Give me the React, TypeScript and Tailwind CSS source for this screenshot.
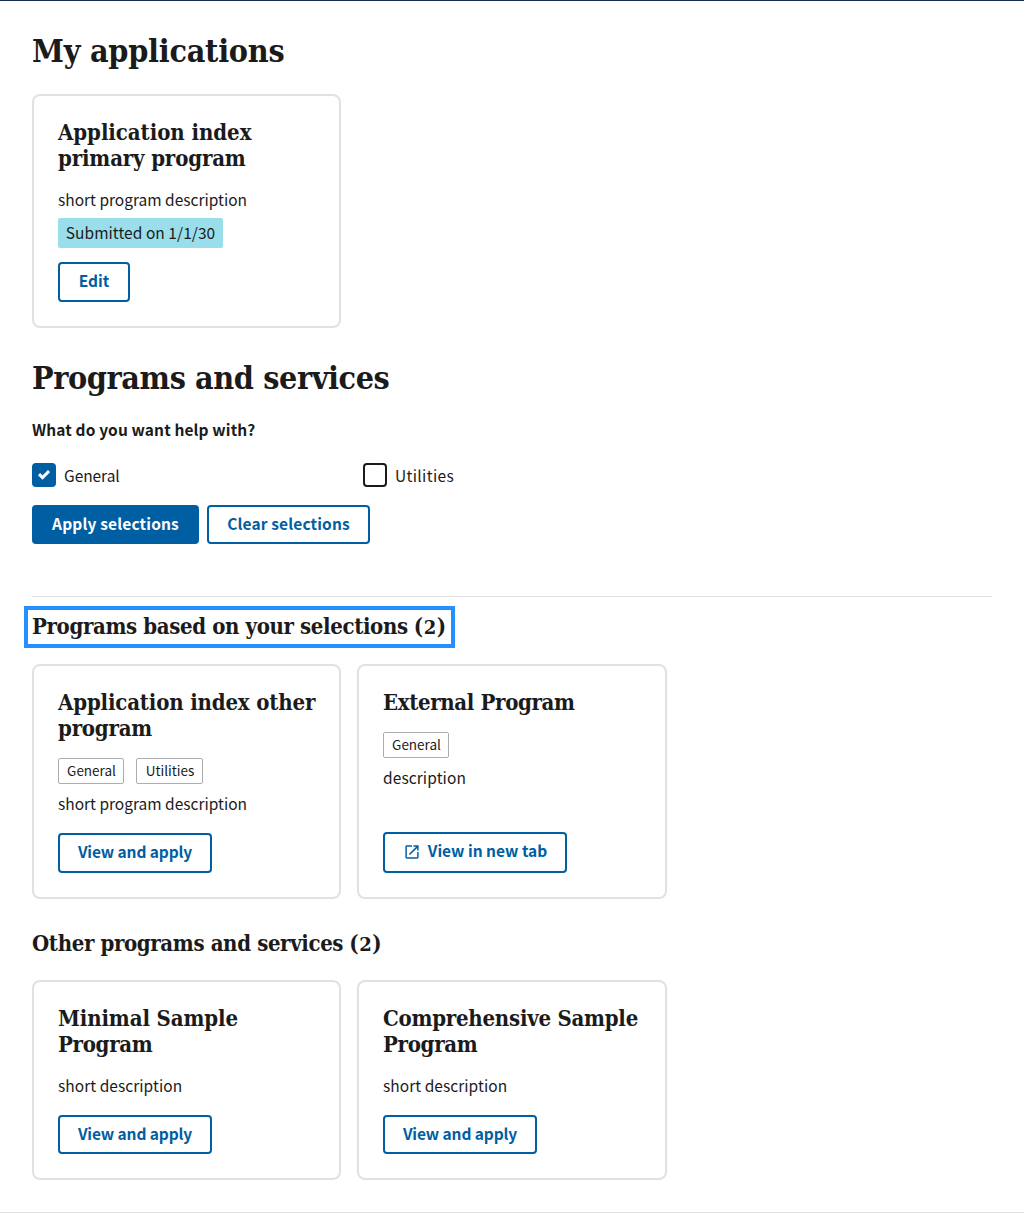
import type { ReactNode } from 'react';

const serif = 'font-["DejaVu_Serif_Condensed","DejaVu_Serif",serif] font-bold';

function CardTitle({ lines }: { lines: [string, string][] }) {
  return (
    <h4 className={`${serif} -mt-px mb-px text-[22px] leading-[26px]`}>
      {lines.map(([text, tracking]) => (
        <span key={text} className={`block whitespace-nowrap ${tracking}`}>
          {text}
        </span>
      ))}
    </h4>
  );
}

function SectionTitle({ text, className }: { text: string; className: string }) {
  return (
    <h3 className={`${serif} flex h-[26px] items-baseline whitespace-pre text-[22px] leading-6 ${className}`}>
      {text}
      <span className="ml-[6px] mr-px">(</span>
      <span className='font-["DejaVu_Serif",serif] text-[18px]'>2</span>
      <span className="ml-px">)</span>
    </h3>
  );
}

function Card({ className, children }: { className: string; children: ReactNode }) {
  return (
    <li className={`flex flex-col items-start rounded-lg border-2 border-[#dfe1e2] p-6 ${className}`}>
      {children}
    </li>
  );
}

function Description({ text, className = '' }: { text: string; className?: string }) {
  return <p className={`mb-px whitespace-nowrap leading-6 ${className}`}>{text}</p>;
}

function Category({ text, className }: { text: string; className: string }) {
  return (
    <span
      className={`flex h-[26px] items-center justify-center rounded-[2px] border border-[#a9aeb1] pb-px pl-px text-[13.5px] leading-none ${className}`}
    >
      {text}
    </span>
  );
}

function Button({ className, children }: { className: string; children: ReactNode }) {
  return (
    <button
      className={`flex items-center justify-center whitespace-nowrap rounded border-2 border-[#005ea2] font-bold leading-none ${className}`}
    >
      {children}
    </button>
  );
}

export default function App() {
  return (
    <div className='h-[1213px] border-t border-t-[#162e51] border-b border-b-[#dfe1e2] bg-white px-8 pt-[30px] font-["Noto_Sans_CJK_SC",sans-serif] text-[15.5px] text-[#1b1b1b]'>
      <h2 className={`${serif} text-[32px] leading-10 tracking-[-0.25px]`}>My applications</h2>
      <ul className="mt-[23px] flex">
        <Card className="h-[234px] w-[309px]">
          <CardTitle
            lines={[
              ['Application index', 'tracking-[-0.05px]'],
              ['primary program', 'tracking-[-0.15px]'],
            ]}
          />
          <Description text="short program description" className="mt-[15px]" />
          <p className="mt-1.5 flex h-[30px] w-[165px] items-center justify-center rounded-[2px] bg-[#99deea] pb-px leading-none tracking-[0.05px]">
            Submitted on 1/1/30
          </p>
          <Button className="mt-auto h-10 w-[72px] pb-[3px] text-[#005ea2]">Edit</Button>
        </Card>
      </ul>

      <h2 className={`${serif} mt-[30px] text-[32px] leading-10 tracking-[-0.4px]`}>
        Programs and services
      </h2>
      <p className="mt-[19px] font-bold leading-6 tracking-[0.12px]">What do you want help with?</p>
      <div className="mt-[22px] flex">
        <label className="flex w-[331px] gap-2 leading-6 tracking-[-0.05px]">
          <span className="flex size-6 items-center justify-center rounded bg-[#005ea2] pb-px">
            <svg width="12" height="10" viewBox="0 0 12 10" fill="none">
              <path d="M1 4.2 L4.5 7.6 L11 1.1" stroke="white" strokeWidth="3" />
            </svg>
          </span>
          <span className="h-6">General</span>
        </label>
        <label className="flex gap-2 leading-6 tracking-[0.35px]">
          <span className="size-6 rounded border-2 border-[#1b1b1b]" />
          <span className="h-6">Utilities</span>
        </label>
      </div>
      <div className="mt-[18px] flex gap-2">
        <Button className="h-[39px] w-[167px] bg-[#005ea2] pb-px tracking-[0.16px] text-white">
          Apply selections
        </Button>
        <Button className="h-[39px] w-[163px] pb-px tracking-[0.14px] text-[#005ea2]">
          Clear selections
        </Button>
      </div>

      <hr className="mt-[52px] border-t border-[#dfe1e2]" />
      <SectionTitle
        text="Programs based on your selections"
        className="mt-[17px] w-[415px] tracking-[-0.37px] outline-4 outline-offset-4 outline-[#2491ff]"
      />
      <ul className="mt-6 flex h-[235px] gap-4">
        <Card className="w-[309px]">
          <CardTitle
            lines={[
              ['Application index other', 'tracking-[-0.16px]'],
              ['program', 'tracking-[-0.2px]'],
            ]}
          />
          <div className="mt-4 flex gap-3">
            <Category text="General" className="w-[66px]" />
            <Category text="Utilities" className="w-[67px]" />
          </div>
          <Description text="short program description" className="mt-[7px]" />
          <Button className="mt-auto h-10 w-[154px] pb-[3px] text-[#005ea2] tracking-[-0.1px]">
            View and apply
          </Button>
        </Card>
        <Card className="w-[310px]">
          <CardTitle lines={[['External Program', 'tracking-[-0.35px]']]} />
          <div className="mt-4 flex">
            <Category text="General" className="w-[66px]" />
          </div>
          <Description text="description" className="mt-[7px] tracking-[0.1px]" />
          <Button className="mt-auto h-[41px] w-[184px] gap-[9px] pb-1 pl-0.5 text-[#005ea2]">
            <svg className="mt-[3px]" width="14" height="14" viewBox="2.5 2.5 19 19" fill="currentColor">
              <path d="M19 19H5V5h7V3H5a2 2 0 0 0-2 2v14a2 2 0 0 0 2 2h14c1.1 0 2-.9 2-2v-7h-2v7zM14 3v2h3.59l-9.83 9.83 1.41 1.41L19 6.41V10h2V3h-7z" />
            </svg>
            View in new tab
          </Button>
        </Card>
      </ul>

      <SectionTitle text="Other programs and services" className="mt-8 tracking-[-0.37px]" />
      <ul className="mt-[23px] flex h-[200px] gap-4">
        <Card className="w-[309px]">
          <CardTitle
            lines={[
              ['Minimal Sample', 'tracking-[-0.12px]'],
              ['Program', 'tracking-[-0.3px]'],
            ]}
          />
          <Description text="short description" className="mt-[15px] tracking-[0.05px]" />
          <Button className="mt-auto h-[39px] w-[154px] pb-px text-[#005ea2] tracking-[-0.1px]">
            View and apply
          </Button>
        </Card>
        <Card className="w-[310px]">
          <CardTitle
            lines={[
              ['Comprehensive Sample', 'tracking-[-0.24px]'],
              ['Program', 'tracking-[-0.3px]'],
            ]}
          />
          <Description text="short description" className="mt-[15px] tracking-[0.05px]" />
          <Button className="mt-auto h-[39px] w-[154px] pb-px text-[#005ea2] tracking-[-0.1px]">
            View and apply
          </Button>
        </Card>
      </ul>
    </div>
  );
}
